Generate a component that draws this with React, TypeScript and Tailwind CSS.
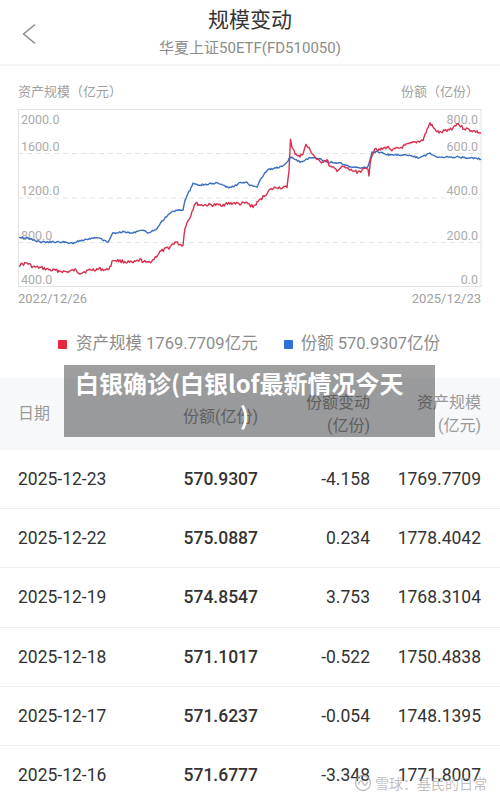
import React from "react";

const TOP = 109;

const redKeys: [number, number][] = [
  [19, 265], [27, 263], [33, 267], [42, 268], [50, 270], [60, 271], [67, 272], [75, 270], [80, 273], [90, 270],
  [100, 269], [107, 270], [110, 267], [113, 260], [120, 261], [127, 262], [133, 263], [140, 260], [147, 263],
  [153, 260], [160, 252], [170, 247], [175, 242], [181, 245], [183, 245], [185, 227], [190, 217], [195, 203],
  [200, 205], [207, 205], [220, 205], [233, 203], [240, 204], [247, 203], [253, 207], [257, 203], [263, 197],
  [270, 190], [277, 187], [283, 188], [287, 187], [289, 170], [290.5, 140], [292, 148], [295, 153], [300, 157],
  [303, 153], [306, 145], [310, 150], [317, 160], [320, 162], [327, 160], [330, 167], [337, 170], [343, 167],
  [350, 170], [357, 172], [363, 170], [368, 168], [369, 175], [371, 157], [375, 148], [380, 150], [387, 147],
  [393, 150], [400, 148], [407, 145], [413, 143], [423, 140], [427, 130], [430, 123], [435, 130], [440, 133],
  [447, 130], [453, 128], [457, 123], [463, 128], [470, 130], [477, 132], [481, 133],
];

const blueKeys: [number, number][] = [
  [19, 237], [27, 238], [40, 242], [60, 242], [73, 243], [83, 240], [97, 237], [108, 242], [113, 233],
  [123, 232], [133, 233], [140, 230], [150, 233], [157, 228], [163, 220], [170, 213], [177, 210], [183, 210],
  [185, 200], [190, 190], [193, 183], [200, 185], [217, 183], [230, 188], [240, 183], [247, 182], [250, 185],
  [257, 187], [260, 180], [267, 170], [280, 167], [287, 163], [290, 157], [293, 158], [300, 162], [310, 158],
  [317, 158], [327, 162], [340, 163], [350, 167], [360, 168], [368, 167], [372, 152], [377, 152], [390, 155],
  [407, 155], [420, 158], [430, 153], [437, 157], [457, 157], [481, 159],
];

function buildPath(keys: [number, number][], amp: number, seed: number) {
  let s = seed;
  const rnd = () => {
    s = (s * 9301 + 49297) % 233280;
    return s / 233280;
  };
  const pts: string[] = [];
  for (let i = 0; i < keys.length - 1; i++) {
    const [x0, y0] = keys[i];
    const [x1, y1] = keys[i + 1];
    const steps = Math.max(1, Math.round((x1 - x0) / 1.1));
    for (let k = 0; k < steps; k++) {
      const t = k / steps;
      const x = x0 + (x1 - x0) * t;
      const y = y0 + (y1 - y0) * t + (rnd() - 0.5) * 2 * amp;
      pts.push(`${x.toFixed(1)},${(y - TOP).toFixed(1)}`);
    }
  }
  const last = keys[keys.length - 1];
  pts.push(`${last[0]},${last[1] - TOP}`);
  return "M" + pts.join(" L");
}

const redPath = buildPath(redKeys, 1.6, 17);
const bluePath = buildPath(blueKeys, 0.8, 91);

const rows = [
  ["2025-12-23", "570.9307", "-4.158", "1769.7709"],
  ["2025-12-22", "575.0887", "0.234", "1778.4042"],
  ["2025-12-19", "574.8547", "3.753", "1768.3104"],
  ["2025-12-18", "571.1017", "-0.522", "1750.4838"],
  ["2025-12-17", "571.6237", "-0.054", "1748.1395"],
  ["2025-12-16", "571.6777", "-3.348", "1771.8007"],
];

const font = "font-['Roboto','Noto_Sans_CJK_SC',sans-serif]";

function Chart() {
  const leftLabels = [
    ["2000.0", 14.5],
    ["1600.0", 41.5],
    ["1200.0", 85.5],
    ["800.0", 130.5],
    ["400.0", 175],
  ] as const;
  const rightLabels = [
    ["800.0", 14.5],
    ["600.0", 41.5],
    ["400.0", 85.5],
    ["200.0", 130.5],
    ["0.0", 175],
  ] as const;
  return (
    <svg width={500} height={178} viewBox="0 0 500 178" className="block">
      <line x1={18} y1={44.5} x2={481} y2={44.5} stroke="#e4e4e4" strokeDasharray="5 4" />
      <line x1={18} y1={89} x2={481} y2={89} stroke="#e4e4e4" strokeDasharray="5 4" />
      <line x1={18} y1={133.5} x2={481} y2={133.5} stroke="#e4e4e4" strokeDasharray="5 4" />
      <rect x={18.5} y={0.5} width={462.5} height={177} fill="none" stroke="#e2e2e2" />
      {leftLabels.map(([t, y]) => (
        <text key={t} x={21} y={y} fontSize={12.5} fill="#ababab" fontFamily="Roboto, sans-serif">
          {t}
        </text>
      ))}
      {rightLabels.map(([t, y]) => (
        <text key={"r" + t} x={478} y={y} fontSize={12.5} fill="#ababab" textAnchor="end" fontFamily="Roboto, sans-serif">
          {t}
        </text>
      ))}
      <path d={bluePath} fill="none" stroke="#3a6fbf" strokeWidth={1.4} strokeLinejoin="round" />
      <path d={redPath} fill="none" stroke="#d8304f" strokeWidth={1.4} strokeLinejoin="round" />
    </svg>
  );
}

export default function App() {
  return (
    <div className={`relative w-[500px] h-[803px] overflow-hidden bg-white ${font}`}>
      {/* Header */}
      <div className="relative h-[64px] flex flex-col items-center">
        <svg width={16} height={22} viewBox="0 0 16 22" className="absolute left-[21px] top-[23px]">
          <path d="M13.5 2 L2.5 11 L13.5 20" fill="none" stroke="#8a8a8a" strokeWidth={1.6} strokeLinecap="round" strokeLinejoin="round" />
        </svg>
        <div className="pt-[6px] text-[21px] leading-[28px] text-[#333]">规模变动</div>
        <div className="mt-[4px] text-[15px] leading-[20px] text-[#8c8c8c]">华夏上证50ETF(FD510050)</div>
      </div>
      <div className="h-[2px] bg-[#f3f3f3]" />

      {/* axis titles */}
      <div className="flex justify-between pl-[18px] pr-[21px] pt-[17px] pb-[8px] text-[13px] leading-[18px] text-[#a0a0a0]">
        <span>资产规模（亿元）</span>
        <span>份额（亿份）</span>
      </div>

      <Chart />

      <div className="flex justify-between pl-[18px] pr-[19px] mt-[3px] text-[13px] leading-[17px] text-[#a0a0a0]">
        <span>2022/12/26</span>
        <span>2025/12/23</span>
      </div>

      {/* legend */}
      <div className="mt-[26px] flex items-center pl-[58px] text-[16.5px] leading-[22px] text-[#8c8c8c]">
        <span className="w-[9px] h-[9px] rounded-[1px] bg-[#e8283f] mr-[9px]" />
        <span>资产规模 1769.7709亿元</span>
        <span className="w-[9px] h-[9px] rounded-[1px] bg-[#2f6fd8] ml-[26px] mr-[8px]" />
        <span>份额 570.9307亿份</span>
      </div>

      {/* table */}
      <div className="mt-[23px]">
        <div className="h-[72px] bg-[#f7f8fa] grid grid-cols-[110px_130px_112px_111px] pl-[18px] pr-[19px] items-center text-[16px] text-[#9a9a9a]">
          <div className="leading-[22px]">日期</div>
          <div className="text-right leading-[22px] mt-[6px]">份额(亿份)</div>
          <div className="text-right leading-[23px]">
            <div>份额变动</div>
            <div>(亿份)</div>
          </div>
          <div className="text-right leading-[23px]">
            <div>资产规模</div>
            <div>(亿元)</div>
          </div>
        </div>
        {rows.map((r) => (
          <div
            key={r[0]}
            className="h-[59.2px] border-b border-[#efefef] grid grid-cols-[110px_130px_112px_111px] pl-[18px] pr-[19px] items-center text-[17.5px] text-[#333]"
          >
            <div>{r[0]}</div>
            <div className="text-right font-medium">{r[1]}</div>
            <div className="text-right">{r[2]}</div>
            <div className="text-right">{r[3]}</div>
          </div>
        ))}
      </div>

      {/* overlay banner */}
      <div className="absolute left-[64px] top-[365px] w-[371px] h-[72px] bg-[rgba(0,0,0,0.38)] text-white font-bold text-[24px] leading-[32px] pt-[2px] pl-[11px] font-['Noto_Sans_CJK_SC',sans-serif]">
        <div className="whitespace-nowrap">白银确诊(白银lof最新情况今天</div>
        <div className="pl-[165px]">)</div>
      </div>

      {/* watermark */}
      <div className="absolute left-[354px] top-[773px] flex items-center gap-[3px] text-[14px] leading-[20px] text-[rgba(170,170,170,0.75)] font-['Noto_Sans_CJK_SC',sans-serif]">
        <svg width={18} height={18} viewBox="0 0 18 18">
          <circle cx={9} cy={9} r={7.5} fill="none" stroke="rgba(170,170,170,0.75)" strokeWidth={1.3} />
          <path d="M4.5 10.5 C5.5 6 8.5 6 9 9 C9.5 12 12.5 12 13.5 7.5" fill="none" stroke="rgba(170,170,170,0.75)" strokeWidth={1.3} />
        </svg>
        <span>雪球：基民的日常</span>
      </div>
    </div>
  );
}
